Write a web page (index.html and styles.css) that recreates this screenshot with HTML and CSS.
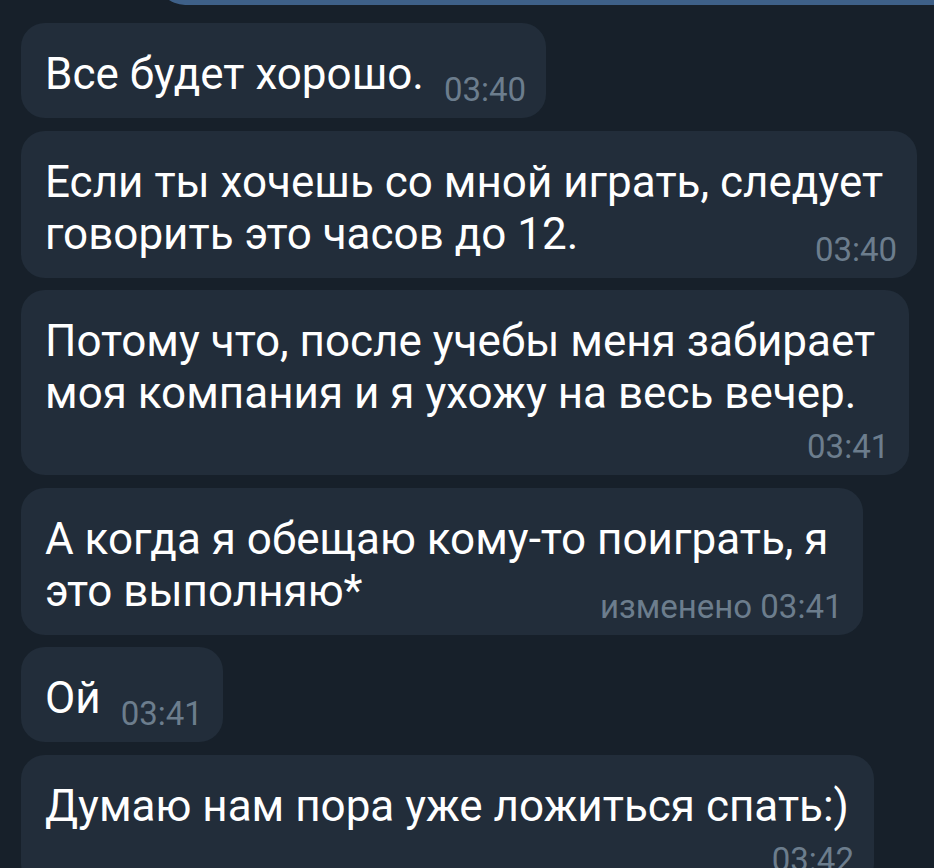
FILE: index.html
```html
<!DOCTYPE html>
<html>
  <head>
    <meta charset="utf-8" />
    <title>Чат</title>
    <meta name="viewport" content="width=device-width, initial-scale=1.0" />
    <link rel="stylesheet" href="styles.css">
  </head>
  <body>
    <div class="out-tail"></div>

    <div class="chat">
      <div class="msg">
        <p class="text">Все будет хорошо.<span class="time">03:40</span></p>
      </div>

      <div class="msg">
        <p class="text">Если ты хочешь со мной играть, следует<br>говорить это часов до 12.<span class="time">03:40</span></p>
      </div>

      <div class="msg">
        <p class="text">Потому что, после учебы меня забирает<br>моя компания и я ухожу на весь вечер.</p>
        <div class="time-row">03:41</div>
      </div>

      <div class="msg">
        <p class="text">А когда я обещаю кому-то поиграть, я<br>это выполняю*<span class="time">изменено 03:41</span></p>
      </div>

      <div class="msg">
        <p class="text">Ой<span class="time">03:41</span></p>
      </div>

      <div class="msg msg-short">
        <p class="text">Думаю нам пора уже ложиться спать:)</p>
        <div class="time-row">03:42</div>
      </div>
    </div>
  </body>
</html>
```

FILE: styles.css
```css
body {
  margin: 0;
  background: #17202a;
  color: #ffffff;
  font-family: Roboto, "Noto Sans", sans-serif;
  overflow: hidden;
}

/* bottom of the outgoing bubble above */
.out-tail {
  height: 30px;
  margin: -25px 0 0 157px;
  background: #3e6088;
  border-bottom-left-radius: 28px;
}

.chat {
  display: flex;
  flex-direction: column;
  align-items: flex-start;
  gap: 12.5px;
  padding: 18px 0 0 21px;
}

.msg {
  display: flow-root;
  background: #222d3a;
  border-radius: 24px;
  padding: 25px 34px 12px 24px;
}

.msg-short {
  padding-right: 25px;
}

.text {
  margin: 0;
  font-size: 44px;
  line-height: 52px;
  white-space: nowrap;
}

.time,
.time-row {
  color: #6c7d8d;
  font-size: 33px;
  line-height: 32px;
}

.time {
  float: right;
  margin: 26px -14px 0 20px;
}

.time-row {
  text-align: right;
  margin: 12px -14px 0 0;
}

.msg-short .time-row {
  margin-right: -5px;
}
```
